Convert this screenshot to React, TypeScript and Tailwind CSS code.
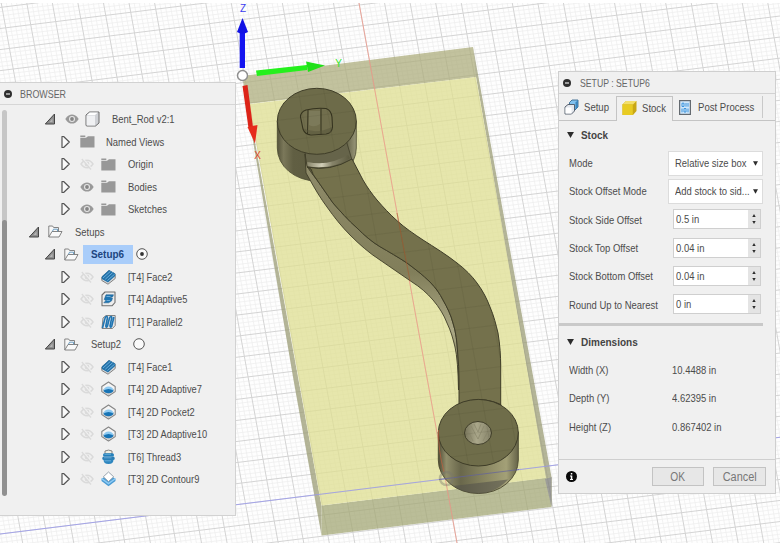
import React from "react";
import { clsx } from "clsx";

/* ---------- small pieces ---------- */

function Label({ children, className }: { children: React.ReactNode; className?: string }) {
  return (
    <span className={clsx("inline-block origin-left whitespace-nowrap text-[11px] leading-[14px]", className ?? "scale-x-[0.86] text-[#4c4c4c]")}>
      {children}
    </span>
  );
}

function Minus() {
  return (
    <svg className="h-2 w-2 shrink-0" viewBox="0 0 8 8">
      <circle cx="4" cy="4" r="4" fill="#2e2e2e" />
      <rect x="2" y="3.4" width="4" height="1.2" fill="#e6e6e6" />
    </svg>
  );
}

function Open() {
  return (
    <svg className="h-3 w-3" viewBox="0 0 12 12">
      <path d="M9.5 1V11H.3Z" fill="#8d8d8d" stroke="#444" strokeWidth="1" />
      <path d="M7.5 5.500V9H4.500Z" fill="#b5b5b5" />
    </svg>
  );
}

function Closed() {
  return (
    <svg className="h-[14px] w-[10px]" viewBox="0 0 10 14">
      <path d="M1 1.500 H2.600 L8.300 7 L2.600 12.500 H1Z" fill="#fafafa" stroke="#555" strokeWidth="1.2" strokeLinejoin="round" />
    </svg>
  );
}

function Eye() {
  return (
    <svg className="h-[10px] w-[14px]" viewBox="0 0 14 10">
      <path d="M.3 5C2.500 1.300 4.700.4 7 .4S11.500 1.300 13.700 5C11.500 8.700 9.300 9.600 7 9.600S2.500 8.700.3 5Z" fill="#999" />
      <circle cx="7" cy="5" r="3" fill="#e6e6e6" />
      <circle cx="7" cy="5" r="1.900" fill="#858585" />
    </svg>
  );
}

function EyeOff() {
  return (
    <svg className="h-[12px] w-[14px]" viewBox="0 0 14 12" fill="none" stroke="#dadada">
      <path d="M1 6C3 3 5 2.200 7 2.200S11 3 13 6C11 9 9 9.800 7 9.800S3 9 1 6Z" strokeWidth="1.400" />
      <circle cx="7" cy="6" r="1.800" strokeWidth="1.200" />
      <path d="M3 1L12 11.500" stroke="#f0f0f0" strokeWidth="1.800" />
      <path d="M1.800 1L11 11.500" strokeWidth="1.200" />
    </svg>
  );
}

function Folder() {
  return (
    <svg className="h-[13px] w-[15px]" viewBox="0 0 15 13">
      <path d="M.3 .5H5.300V2H.3ZM.3 2.700H6L8 1.300H14.500V12.500H.3Z" fill="#989898" />
    </svg>
  );
}

function OpenFolder() {
  return (
    <svg className="h-[13px] w-[15px]" viewBox="0 0 15 13" fill="none" stroke="#777" strokeWidth=".9" strokeLinejoin="round">
      <path d="M.8 12V1H4.600L5.600 2.500H10.500V6.500" fill="#f8f8f8" />
      <path d="M.8 12L4 6.500H14L11 12Z" fill="#fafafa" />
      <path d="M4.500 6.300L5.500 4.200H9.500V6.300" stroke="#5e95bd" />
    </svg>
  );
}

function Cube() {
  return (
    <svg className="h-4 w-[15px]" viewBox="0 0 15 16">
      <path d="M1 4L4.500 1H14V12L10.500 15H2Q1 15 1 14Z" fill="#cfd1d5" stroke="#6d6d6d" strokeLinejoin="round" />
      <path d="M1.600 4.500H10V14.400H2.200Q1.600 14.400 1.600 13.800Z" fill="#f0f1f3" />
      <path d="M2 4L5 1.600H13L10 4Z" fill="#fff" />
    </svg>
  );
}

type OpKind = "face" | "adaptive" | "parallel" | "pocket" | "thread" | "contour";

function OpIcon({ kind }: { kind: OpKind }) {
  return (
    <svg className="h-4 w-[15px]" viewBox="0 0 15 16">
      {kind === "face" && (
        <>
          <path d="M.8 8L8 1.500L14.200 5V9.500L7 15.200L.8 11.500Z" fill="#dcdcdc" stroke="#777" strokeWidth=".9" strokeLinejoin="round" />
          <path d="M.8 7.500L8 1L14.200 4.600V7L7 13.500L.8 10Z" fill="#2373aa" />
          <path d="M2 9L9.500 2.300M4.200 10.300L11.700 3.600M6.400 11.600L13.600 5.200" stroke="#7dbbe6" strokeWidth=".8" />
        </>
      )}
      {kind === "adaptive" && (
        <>
          <path d="M1 4L4 1H14V11.500L11 14.800H1Z" fill="#ededed" stroke="#707070" strokeWidth="1.100" strokeLinejoin="round" />
          <path d="M5 3.800H12.500L11.500 6H8.500L11.500 7.200L10.500 10L7.500 11.800H2.800L5 9.500L3.200 8.500Z" fill="#1e76b3" stroke="#2a6592" strokeWidth=".6" />
          <path d="M5.500 5.500H9.500M5.500 9.500H9" stroke="#8fc6ec" strokeWidth=".7" />
        </>
      )}
      {kind === "parallel" && (
        <>
          <path d="M2 4L5 1.500H14.200V11.500L11.500 14.500H1Z" fill="#e8e8e8" stroke="#777" strokeWidth=".9" />
          <path d="M1.500 14L3.800 5Q4.300 2.500 5.600 2.500T6.200 5L4.800 12Q5 14.300 6.500 12L8.200 5Q8.800 2.500 10 2.500T10.500 5L9 12Q9.300 14.300 10.800 12L12.900 3" fill="none" stroke="#2075b2" strokeWidth="1.600" />
        </>
      )}
      {kind === "pocket" && (
        <>
          <path d="M.8 5.500L7.500 1L14.200 5.500V10.500L7.500 15L.8 10.500Z" fill="#f5f5f5" stroke="#858585" strokeWidth="1.100" strokeLinejoin="round" />
          <path d="M1.500 10.500L7.500 14.300L13.500 10.500V8H1.500Z" fill="#cdcdcd" />
          <path d="M2.500 9Q3.500 5.500 7.500 5.500T12.500 9Q11.500 12 7.500 12T2.500 9Z" fill="#8fcaf1" />
          <path d="M2.500 9.500Q7.500 6.500 12.500 9.500Q11.500 12.300 7.500 12.300T2.500 9.500Z" fill="#1874b5" />
        </>
      )}
      {kind === "thread" && (
        <>
          <path d="M4 2Q7.500 .2 11 2V5H4Z" fill="#f2efe2" stroke="#777" strokeWidth=".9" />
          <rect x="2" y="4.300" width="11" height="3.300" rx="1.600" fill="#2480bb" />
          <rect x="1.300" y="7.600" width="12.400" height="3.400" rx="1.600" fill="#2b7eb5" />
          <path d="M2.500 10.800H12.500Q12.500 15 7.500 15T2.500 10.800Z" fill="#2e86bf" />
          <path d="M3.500 5.300H10M3 8.800H10.500M3.500 11.800H10" stroke="#8ec8ed" strokeWidth=".6" />
        </>
      )}
      {kind === "contour" && (
        <>
          <path d="M.5 8L7.500 3L14.500 8V10L7.500 15.200L.5 10Z" fill="#4a9bd4" />
          <path d="M.5 7.500L7.500 12.500L14.500 7.500" fill="none" stroke="#8fcbf4" strokeWidth="1.500" />
          <path d="M2.300 5.800L7.500 1L12.700 5.800L7.500 10.500Z" fill="#fff" stroke="#8d9ba5" strokeWidth=".9" />
        </>
      )}
    </svg>
  );
}

/* ---------- browser tree ---------- */

function Cell({ w, children }: { w: string; children: React.ReactNode }) {
  return <span className={clsx("flex shrink-0 items-center", w)}>{children}</span>;
}

function Row({ pad, children }: { pad: string; children: React.ReactNode }) {
  return <div className={clsx("flex h-[22.5px] items-center", pad)}>{children}</div>;
}

function FolderRow({ name, visible }: { name: string; visible: boolean }) {
  return (
    <Row pad="pl-[61px]">
      <Cell w="w-[19px]"><Closed /></Cell>
      <Cell w="w-[21px]">{visible ? <Eye /> : <EyeOff />}</Cell>
      <Cell w="w-[27px]"><Folder /></Cell>
      <Label>{name}</Label>
    </Row>
  );
}

function OpRow({ name, kind }: { name: string; kind: OpKind }) {
  return (
    <Row pad="pl-[61px]">
      <Cell w="w-[19px]"><Closed /></Cell>
      <Cell w="w-[21px]"><EyeOff /></Cell>
      <Cell w="w-[27px]"><OpIcon kind={kind} /></Cell>
      <Label className="scale-x-[0.845] text-[#4c4c4c]">{name}</Label>
    </Row>
  );
}

function Radio({ on }: { on?: boolean }) {
  return (
    <svg className="h-3 w-3" viewBox="0 0 12 12">
      <circle cx="6" cy="6" r="5.300" fill="#fafafa" stroke="#555" strokeWidth="1" />
      {on && <circle cx="6" cy="6" r="1.900" fill="#333" />}
    </svg>
  );
}

function BrowserPanel() {
  return (
    <section className="mt-[82px] flex h-[434px] w-[236px] flex-col border-y border-r border-[#d2d2d2] bg-[#f0f0f0]">
      <header className="flex h-[22px] shrink-0 items-center gap-[9px] border-b border-[#d6d6d6] pl-1">
        <Minus />
        <Label className="ml-[-1px] scale-x-[0.81] text-[#666]">BROWSER</Label>
      </header>
      <div className="flex pt-[3px]">
        <div className="mt-[2px] flex h-[386px] w-[5px] shrink-0 flex-col overflow-hidden rounded-full bg-[#c6c6c6] ml-[2px] mr-[-7px]">
          <div className="mt-[110px] flex-1 rounded-full bg-[#909090]" />
        </div>
        <div className="flex-1">
          <Row pad="pl-[45px]">
            <Cell w="w-[20px]"><Open /></Cell>
            <Cell w="w-[20px]"><Eye /></Cell>
            <Cell w="w-[27px]"><Cube /></Cell>
            <Label>Bent_Rod v2:1</Label>
          </Row>
          <Row pad="pl-[61px]">
            <Cell w="w-[19px]"><Closed /></Cell>
            <Cell w="w-[26px]"><Folder /></Cell>
            <Label>Named Views</Label>
          </Row>
          <FolderRow name="Origin" visible={false} />
          <FolderRow name="Bodies" visible />
          <FolderRow name="Sketches" visible />
          <Row pad="pl-[29px]">
            <Cell w="w-[19px]"><Open /></Cell>
            <Cell w="w-[27px]"><OpenFolder /></Cell>
            <Label>Setups</Label>
          </Row>
          <Row pad="pl-[45px]">
            <Cell w="w-[19px]"><Open /></Cell>
            <Cell w="w-[19px]"><OpenFolder /></Cell>
            <span className="mr-[3px] flex h-[19px] w-[50px] items-center bg-[#a9cdfa] pl-2">
              <Label className="scale-x-[0.9] font-bold text-[#20457f]">Setup6</Label>
            </span>
            <Radio on />
          </Row>
          <OpRow name="[T4] Face2" kind="face" />
          <OpRow name="[T4] Adaptive5" kind="adaptive" />
          <OpRow name="[T1] Parallel2" kind="parallel" />
          <Row pad="pl-[45px]">
            <Cell w="w-[19px]"><Open /></Cell>
            <Cell w="w-[27px]"><OpenFolder /></Cell>
            <Cell w="w-[42px]"><Label>Setup2</Label></Cell>
            <Radio />
          </Row>
          <OpRow name="[T4] Face1" kind="face" />
          <OpRow name="[T4] 2D Adaptive7" kind="pocket" />
          <OpRow name="[T4] 2D Pocket2" kind="pocket" />
          <OpRow name="[T3] 2D Adaptive10" kind="pocket" />
          <OpRow name="[T6] Thread3" kind="thread" />
          <OpRow name="[T3] 2D Contour9" kind="contour" />
        </div>
      </div>
    </section>
  );
}

/* ---------- setup dialog ---------- */

function Caret({ className }: { className: string }) {
  return (
    <svg className={clsx("shrink-0", className)} viewBox="0 0 8 7">
      <path d="M0 0H8L4 7Z" fill="#2c2c2c" />
    </svg>
  );
}

function SelectRow({ name, value }: { name: string; value: string }) {
  return (
    <div className="flex h-[28.2px] items-center pl-[10px]">
      <span className="flex w-[99px] items-center"><Label>{name}</Label></span>
      <span className="flex h-[25px] w-[95px] items-center border border-[#dcdcdc] bg-white pl-[6px]">
        <span className="flex w-[78px] items-center"><Label>{value}</Label></span>
        <Caret className="h-[5px] w-[5px]" />
      </span>
    </div>
  );
}

function SpinRow({ name, value }: { name: string; value: string }) {
  return (
    <div className="flex h-[28.2px] items-center pl-[10px]">
      <span className="flex w-[104px] items-center pt-[1px]"><Label>{name}</Label></span>
      <span className="flex h-[20px] w-[88px] border border-[#cfcfcf] bg-white pl-[2px]">
        <span className="flex flex-1 items-center"><Label>{value}</Label></span>
        <span className="flex w-[12px] flex-col items-center justify-around bg-[#e4e4e4] py-[2px]">
          <Caret className="h-[3px] w-1 rotate-180" />
          <Caret className="h-[3px] w-1" />
        </span>
      </span>
    </div>
  );
}

function ValueRow({ name, value }: { name: string; value: string }) {
  return (
    <div className="flex h-[28.2px] items-center pl-[10px]">
      <span className="flex w-[103px] items-center"><Label>{name}</Label></span>
      <Label>{value}</Label>
    </div>
  );
}

function SetupPanel() {
  return (
    <section className="mt-[71px] flex h-[423px] w-[218px] flex-col border border-[#cfcfcf] bg-[#f0f0f0]">
      <header className="flex h-[22px] shrink-0 items-center gap-[9px] border-b border-[#d2d2d2] pl-1">
        <Minus />
        <Label className="scale-x-[0.79] text-[#666]">SETUP : SETUP6</Label>
      </header>
      <nav className="flex h-[27px] shrink-0 pt-[2px]">
        <div className="flex w-[57px] items-center border-b border-[#c4c4c4] pb-[2px] pl-[5px]">
          <svg className="mr-[5px] h-4 w-[15px] shrink-0" viewBox="0 0 15 16">
            <path d="M5.500 3.500L8 1H14V8L11 11H5.500Z" fill="#80c1ef" stroke="#39688c" strokeWidth=".9" strokeLinejoin="round" />
            <path d="M11.500 3.500L14 1V8L11.500 10.500Z" fill="#3c86bd" />
            <path d="M1 8L4 5.500H10.500V12L7.500 15H1Z" fill="#e4e7ed" stroke="#4b5563" strokeWidth=".9" strokeLinejoin="round" />
            <path d="M1.500 8.500H7.500V14.500H1.500Z" fill="#fff" />
          </svg>
          <Label className="scale-x-[0.87] text-[#4c4c4c]">Setup</Label>
        </div>
        <div className="flex w-[57px] items-center border-x border-t border-[#c4c4c4] pb-[3px] pl-[5px]">
          <svg className="mr-[5px] h-4 w-[15px] shrink-0" viewBox="0 0 15 16">
            <path d="M.5 4.500L4 1H14.500V11L11 15H.5Z" fill="#c9a715" />
            <path d="M.5 4.500L4 1H14.500L11 4.500Z" fill="#f3df6c" />
            <path d="M.5 4.500H10.800V15H.5Z" fill="#e8cb22" />
          </svg>
          <Label className="scale-x-[0.87] text-[#4c4c4c]">Stock</Label>
        </div>
        <div className="relative flex w-[102px] items-center border-b border-[#c4c4c4] pb-[2px] pl-[6px]">
          <svg className="mr-[7px] h-[15px] w-3 shrink-0" viewBox="0 0 12 15">
            <rect x=".6" y=".6" width="10.800" height="13.800" fill="#cfe7fb" stroke="#646a70" strokeWidth="1.200" />
            <path d="M3 3.200H5V6.500H3ZM7 3V6.700M9 3V6.700M3 8.500V12.300M5 8.500H7V12H5ZM9 8.500V12.300" fill="none" stroke="#3c94dc" strokeWidth="1" />
          </svg>
          <Label className="scale-x-[0.87] text-[#4c4c4c]">Post Process</Label>
          <span className="absolute right-[12px] top-0 h-[22px] w-px bg-[#c9c9c9]" />
        </div>
      </nav>
      <div className="flex h-[28px] shrink-0 items-center gap-[7px] pl-2">
        <Caret className="h-[6px] w-[7px]" />
        <Label className="scale-x-[0.9] font-bold text-[#444]">Stock</Label>
      </div>
      <SelectRow name="Mode" value="Relative size box" />
      <SelectRow name="Stock Offset Mode" value="Add stock to sid..." />
      <SpinRow name="Stock Side Offset" value="0.5 in" />
      <SpinRow name="Stock Top Offset" value="0.04 in" />
      <SpinRow name="Stock Bottom Offset" value="0.04 in" />
      <SpinRow name="Round Up to Nearest" value="0 in" />
      <div className="mt-[5px] h-[3px] w-[204px] shrink-0 bg-[#c9c9c9]" />
      <div className="flex h-[32px] shrink-0 items-center gap-[7px] pl-2">
        <Caret className="h-[6px] w-[7px]" />
        <Label className="scale-x-[0.91] font-bold text-[#444]">Dimensions</Label>
      </div>
      <div className="mt-[-2px]">
        <ValueRow name="Width (X)" value="10.4488 in" />
        <ValueRow name="Depth (Y)" value="4.62395 in" />
        <ValueRow name="Height (Z)" value="0.867402 in" />
      </div>
      <footer className="mt-auto flex h-[34px] shrink-0 items-center border-t border-[#cfcfcf] pl-[7px]">
        <svg className="mr-[75px] h-[11px] w-[11px] shrink-0" viewBox="0 0 11 11">
          <circle cx="5.500" cy="5.500" r="5.500" fill="#0a0a0a" />
          <path d="M4.800 2H6.300V3.400H4.800ZM4 4.500H6.300V8H7V8.900H4V8H4.800V5.400H4Z" fill="#fff" />
        </svg>
        <button className="mr-[9px] flex h-[19px] w-[52px] items-center justify-center border border-[#c3c3c3] bg-[#e7e7e7]">
          <span className="scale-x-[0.85] text-[12px] leading-3 text-[#777]">OK</span>
        </button>
        <button className="flex h-[19px] w-[53px] items-center justify-center border border-[#c3c3c3] bg-[#e7e7e7]">
          <span className="scale-x-[0.91] text-[12px] leading-3 text-[#777]">Cancel</span>
        </button>
      </footer>
    </section>
  );
}

/* ---------- 3D viewport ---------- */

// Ground plane: ORIGIN is the world origin, U and V are one major grid step each.
const ORIGIN = [445.4, 478.8];
const U = [24.99, -3.1];
const V = [3.74, 20.6];

function gridPath(major: boolean) {
  let d = "";
  for (let k = -150; k <= 150; k++) {
    if ((k % 5 === 0) !== major) continue;
    const t = k / 5;
    const line = (s: number[], r: number[]) => {
      const x = ORIGIN[0] + s[0] * t;
      const y = ORIGIN[1] + s[1] * t;
      d += `M${(x - r[0] * 40).toFixed(1)} ${(y - r[1] * 40).toFixed(1)}L${(x + r[0] * 40).toFixed(1)} ${(y + r[1] * 40).toFixed(1)}`;
    };
    line(U, V);
    line(V, U);
  }
  return d;
}

const MINOR = gridPath(false);
const MAJOR = gridPath(true);

const ROD_TOP =
  "M307 167Q330 172 352 159L363 180C367 187 372 194 377 200C383 207 390 214.500 397 220.700C405 228 414 234 423 240C434 247 447 255 457 263C465 269 472 276 477 283C483 291 487 299 490 307C494 316 496 325 498 333C500 345 500.700 356 500.700 367V412H459V380C459 371 458.500 362 457.700 353C457 342 456 332 453 323C451 315 447 307 443 300C440 294 436 288 430 282C423 275 415 269 407 263C398 257 389 252 380 246.700C372 242 364 235 357 228C348 220 340 211 333 203L317 180Q312 174 311 169Z";
const ROD_SIDE =
  "M305 154L306 173L310 180C315 189 321 199 327 207C334 217 342 227 350 235C359 244 369 253 380 260L412 282C420 287 427 293 433 300C439 307 444 315 447 323C451 331 453 339 455 347Q458 360 458.500 390L459 380C459 371 458.500 362 457.700 353C457 342 456 332 453 323C451 315 447 307 443 300C440 294 436 288 430 282C423 275 415 269 407 263C398 257 389 252 380 246.700C372 242 364 235 357 228C348 220 340 211 333 203L317 180Q309 170 307 166Z";

function Viewport() {
  return (
    <svg className="block h-[557px] w-[782px]" viewBox="0 0 782 557">
      <defs>
        <clipPath id="view"><rect x="0" y="3" width="780" height="540" /></clipPath>
        <linearGradient id="drum"><stop offset="0" stopColor="#57553c" /><stop offset=".08" stopColor="#7b785a" /><stop offset=".2" stopColor="#615f43" /><stop offset=".85" stopColor="#5a583e" /><stop offset="1" stopColor="#9a987a" /></linearGradient>
        <linearGradient id="drum2"><stop offset="0" stopColor="#4e4c35" /><stop offset=".1" stopColor="#918e6b" /><stop offset=".28" stopColor="#69674b" /><stop offset=".6" stopColor="#8b8863" /><stop offset=".85" stopColor="#a3a077" /><stop offset="1" stopColor="#656348" /></linearGradient>
        <linearGradient id="neck"><stop offset="0" stopColor="#88856a" /><stop offset=".35" stopColor="#d2cfb8" /><stop offset=".6" stopColor="#87846a" /><stop offset="1" stopColor="#5e5c42" /></linearGradient>
        <linearGradient id="side" x1="0" y1="0" x2="0" y2="1"><stop offset="0" stopColor="#908c6b" /><stop offset=".5" stopColor="#817e5a" /><stop offset=".75" stopColor="#aaa784" /><stop offset="1" stopColor="#77744f" /></linearGradient>
        <linearGradient id="bore"><stop offset="0" stopColor="#77745a" /><stop offset=".45" stopColor="#aaa78a" /><stop offset="1" stopColor="#858268" /></linearGradient>
      </defs>
      <g clipPath="url(#view)">
        <rect x="0" y="3" width="780" height="540" fill="#fefefe" />
        <path d={MINOR} stroke="#efefef" strokeWidth=".8" fill="none" />
        <path d={MAJOR} stroke="#d4d4d4" strokeWidth="1" fill="none" />

        {/* stock box */}
        <g opacity=".75">
          <path d="M242 76L473 47L477 77L248 104Z" fill="#aeae7e" />
          <path d="M242 76L248 104L321.500 505.500V535.500L293.500 380Z" fill="#9c9d76" />
          <path d="M473 47L551.500 477V507L545.500 478L476 77Z" fill="#9c9d76" />
          <path d="M321.500 505.500L551.500 477V507L321.500 535.500Z" fill="#a4a876" />
          <path d="M249 104L476 77L546 478L321.500 505.500Z" fill="#dfdf91" />
          <path d="M545 479L551.500 477V507Z" fill="#7d7d78" />
        </g>

        {/* world axes on the ground plane */}
        <path d="M359 3L457 543" stroke="#f09a8c" strokeWidth="1" opacity=".8" />
        <path d="M0 534L782 437" stroke="#9c9cec" strokeWidth="1" opacity=".85" />

        {/* upper boss */}
        <path d="M277.300 121V148A39.500 33 0 0 0 356.300 148V121Z" fill="url(#drum)" stroke="#49472f" strokeWidth=".8" />
        <path d="M305 150L346 140L352 160Q330 173 306 167Z" fill="#66644a" stroke="#3f3d2a" strokeWidth=".8" />
        <path d="M307 164Q330 168.500 349 156.500" stroke="url(#neck)" strokeWidth="4" fill="none" />
        <path d={ROD_SIDE} fill="url(#side)" stroke="#3f3d28" strokeWidth=".9" />
        <path d={ROD_TOP} fill="#74714c" stroke="#3f3d28" strokeWidth="1" />
        <ellipse cx="316.800" cy="121.300" rx="39.500" ry="33" fill="#6d6b49" stroke="#3f3d28" strokeWidth="1" />
        <path d="M306 110Q316 107.500 326 108.500Q331 110 332 117L332.500 127Q332 133 326 134L311 135Q305 134.500 303 129L300.500 117Q300.500 112 306 110Z" fill="#716e4d" stroke="#35331f" strokeWidth="1.100" />
        <path d="M308 110L307.500 134M321 108.500V134.500" stroke="#35331f" strokeWidth="1" />
        <path d="M309 111H320V124Q314 128 309 125Z" fill="#827f60" opacity=".7" />
        <path d="M302 128Q316 135 332 127L331 133L311 135Z" fill="#56543a" opacity=".5" />

        {/* lower boss */}
        <path d="M459 405Q479 395 501 405" fill="none" stroke="#3b3925" strokeWidth="1.500" />
        <path d="M438.300 432V460A40 33.500 0 0 0 518.300 460V432Z" fill="url(#drum2)" stroke="#49472f" strokeWidth=".9" />
        <path d="M453 486L508 479.500Q495 493.500 478 493.500Q463 493 453 486Z" fill="#55544b" opacity=".6" />
        <ellipse cx="478.300" cy="432.700" rx="40" ry="33.300" fill="#6f6d4a" stroke="#3f3d28" strokeWidth="1" />
        <ellipse cx="478" cy="433" rx="13.500" ry="11.500" fill="url(#bore)" stroke="#3f3d28" strokeWidth="1" />
        <path d="M471 426L478 439L484 426M474 424L478 432L481 424M468 431L473 441M488 431L483 441" stroke="#88856a" strokeWidth=".7" fill="none" />
        <path d="M438.500 430Q438 450 444 472" stroke="#c2603e" strokeWidth="1" fill="none" opacity=".7" />
        <path d="M439 479.500L519 469.500" stroke="#62629f" strokeWidth="1" opacity=".7" />
        <circle cx="446.500" cy="478.500" r="6.500" fill="none" stroke="#77756b" strokeWidth="2.500" opacity=".4" />

        {/* grid showing faintly through the solids */}
        <clipPath id="solid"><path d={ROD_TOP} /><ellipse cx="316.800" cy="121.300" rx="39.500" ry="33" /><ellipse cx="478.300" cy="432.700" rx="40" ry="33.300" /></clipPath>
        <path d={MAJOR} clipPath="url(#solid)" stroke="#38361f" strokeWidth="1" opacity=".09" fill="none" />
        <path d="M397 213L410 281" stroke="#a8592f" strokeWidth="1" opacity=".6" />

        {/* work coordinate triad */}
        <rect x="239.700" y="30" width="5.300" height="38" fill="#1515f0" />
        <path d="M237 32L242.500 18L248 32Q242.500 35 237 32Z" fill="#1212e4" />
        <path d="M256 70.500L307 65V70L257 76Z" fill="#25f01d" />
        <path d="M306 61.500L325 65.500L308 72Z" fill="#20e019" />
        <path d="M242.500 86L247.500 85L253 127L248.500 128Z" fill="#dc2418" />
        <path d="M247.500 127L257.500 125L255 143.500Z" fill="#e62c1c" />
        <circle cx="242.500" cy="75.500" r="5" fill="#fff" stroke="#8e8e8e" strokeWidth="1.500" />
        <g fontFamily="'Liberation Sans', Arial, sans-serif" fontSize="10" textAnchor="middle">
          <text x="243" y="11.500" fill="#3c3cf0">Z</text>
          <text x="338.500" y="66.500" fill="#35e52c">Y</text>
          <text x="257.500" y="158.500" fill="#e04a30">X</text>
        </g>
      </g>
    </svg>
  );
}

export default function App() {
  return (
    <main className="relative h-[557px] w-[782px] overflow-hidden bg-white font-['Liberation_Sans',Arial,sans-serif]">
      <Viewport />
      <div className="absolute inset-0 flex items-start justify-between pr-[6px]">
        <BrowserPanel />
        <SetupPanel />
      </div>
    </main>
  );
}
